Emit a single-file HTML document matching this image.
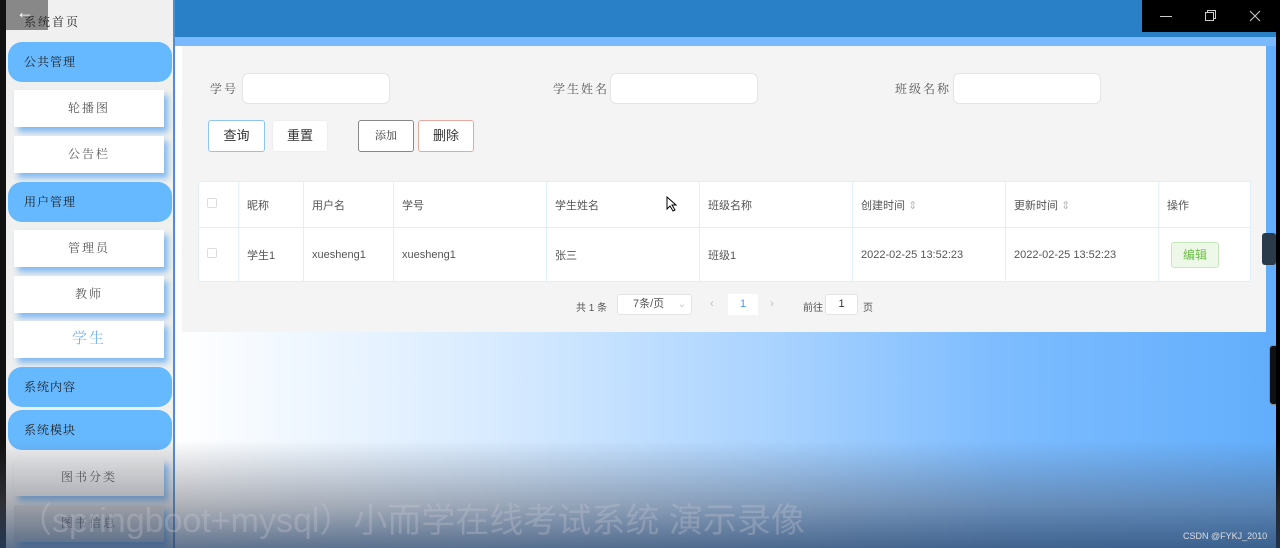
<!DOCTYPE html>
<html><head><meta charset="utf-8"><style>
*{margin:0;padding:0;box-sizing:border-box}
body{width:1280px;height:548px;overflow:hidden;position:relative;font-family:"Liberation Sans","Noto Sans CJK SC",sans-serif;background:#000}
.abs{position:absolute}
#main{left:175px;top:0;width:1101px;height:548px;background:linear-gradient(90deg,#ffffff 0%,#d6eaff 30%,#a8d2ff 55%,#7dbcff 75%,#62aefc 100%)}
#top{left:175px;top:0;width:1101px;height:37px;background:#2a80c6}
#strip{left:175px;top:37px;width:1101px;height:9px;background:#7ab8ff}
#win{left:1142px;top:0;width:138px;height:32px;background:#000;color:#ccc}
#panel{left:182px;top:46px;width:1084px;height:286px;background:#f4f4f4}
#shade{left:0;top:440px;width:1280px;height:108px;background:linear-gradient(180deg,rgba(90,90,90,0) 0%,rgba(80,85,100,.45) 60%,rgba(45,70,105,.75) 100%)}
#side{left:0;top:0;width:175px;height:548px;background:#f0f0f0;border-right:2px solid #4a90d9}
#side .l{position:absolute;left:0;top:0;width:6px;height:548px;background:#111}
.grp{position:absolute;left:8px;width:164px;height:40px;background:#66b8ff;border-radius:14px;font-family:"Liberation Serif","Noto Serif CJK SC",serif;font-size:12px;color:#222;line-height:40px;padding-left:16px;letter-spacing:1px}
.sub{position:absolute;left:14px;width:150px;height:37px;background:#fff;box-shadow:4px 5px 6px rgba(100,170,240,.8);font-family:"Liberation Serif","Noto Serif CJK SC",serif;font-size:12px;color:#555;text-align:center;line-height:37px;letter-spacing:2px}
.lab{position:absolute;font-family:"Liberation Serif","Noto Serif CJK SC",serif;font-size:12px;color:#555;letter-spacing:2px}
.inp{position:absolute;width:148px;height:31px;background:#fff;border:1px solid #e4e4e4;border-radius:6px}
.btn{position:absolute;height:32px;background:#fff;border:1px solid #ddd;border-radius:3px;font-size:13px;color:#333;text-align:center;line-height:30px}
table{position:absolute;left:198px;top:181px;border-collapse:collapse;background:#fff;font-size:11px;color:#555}
td{border:1px solid #dff0fa;padding-left:8px;vertical-align:middle}
.cb{display:inline-block;width:10px;height:10px;border:1px solid #ddd;border-radius:2px;background:#fff}
.pg{position:absolute;font-size:10px;color:#555}
</style></head><body>
<div class="abs" id="main"></div>
<div class="abs" id="top"></div>
<div class="abs" id="strip"></div>
<div class="abs" id="panel"></div>
<div class="lab" style="left:210px;top:80px">学号</div>
<div class="inp" style="left:242px;top:73px"></div>
<div class="lab" style="left:553px;top:80px">学生姓名</div>
<div class="inp" style="left:610px;top:73px"></div>
<div class="lab" style="left:895px;top:80px">班级名称</div>
<div class="inp" style="left:953px;top:73px"></div>
<div class="btn" style="left:208px;top:120px;width:57px;border-color:#90c4ee">查询</div>
<div class="btn" style="left:272px;top:120px;width:56px;border-color:#eee">重置</div>
<div class="btn" style="left:358px;top:120px;width:56px;border-color:#888;font-size:11px;font-family:'Liberation Serif','Noto Serif CJK SC',serif">添加</div>
<div class="btn" style="left:418px;top:120px;width:56px;border-color:#e8a8a0">删除</div>
<table>
<tr style="height:46px"><td style="width:40px"><span class="cb"></span></td><td style="width:65px">昵称</td><td style="width:90px">用户名</td><td style="width:153px">学号</td><td style="width:153px">学生姓名</td><td style="width:153px">班级名称</td><td style="width:153px">创建时间 <span style="color:#bbb">⇕</span></td><td style="width:153px">更新时间 <span style="color:#bbb">⇕</span></td><td style="width:92px">操作</td></tr>
<tr style="height:54px"><td><span class="cb"></span></td><td>学生1</td><td>xuesheng1</td><td>xuesheng1</td><td>张三</td><td>班级1</td><td>2022-02-25 13:52:23</td><td>2022-02-25 13:52:23</td><td><span style="display:inline-block;width:48px;height:26px;border:1px solid #c8e6bc;background:#eef8e8;color:#6cc04a;border-radius:3px;text-align:center;line-height:24px;font-size:12px;margin-left:4px">编辑</span></td></tr>
</table>
<svg class="abs" style="left:666px;top:196px" width="12" height="16"><path d="M1 1 L1 13 L4 10 L7 15 L9 14 L6 9 L10 9 Z" fill="#fff" stroke="#000" stroke-width="1"/></svg>
<div class="pg" style="left:576px;top:299px">共 1 条</div>
<div class="abs" style="left:617px;top:294px;width:75px;height:21px;background:#fff;border:1px solid #e4e4e4;border-radius:3px;font-size:11px;color:#555;line-height:19px;padding-left:15px">7条/页 <span style="color:#ccc;margin-left:10px">⌄</span></div>
<div class="abs" style="left:703px;top:294px;width:83px;height:21px;background:#f4f4f4;font-size:11px;color:#bbb;line-height:21px"><span style="position:absolute;left:7px">‹</span><span style="position:absolute;left:25px;width:30px;height:21px;background:#fff;text-align:center;color:#409eff">1</span><span style="position:absolute;left:67px">›</span></div>
<div class="pg" style="left:803px;top:299px">前往</div>
<div class="abs" style="left:825px;top:294px;width:33px;height:21px;background:#fff;border:1px solid #e4e4e4;border-radius:3px;font-size:11px;color:#333;text-align:center;line-height:19px">1</div>
<div class="pg" style="left:863px;top:299px">页</div>
<div class="abs" style="left:1262px;top:233px;width:14px;height:32px;background:#2a3a4a;border-radius:3px"></div>
<div class="abs" style="left:1269px;top:345px;width:10px;height:60px;background:#111;border:1px solid #888;border-radius:4px"></div>
<div class="abs" style="left:1276px;top:0;width:4px;height:548px;background:#000"></div>
<div class="abs" id="win">
<svg style="position:absolute;left:0;top:0" width="138" height="32"><path d="M18 16.5H30" stroke="#ccc" stroke-width="1"/><rect x="63.5" y="12.5" width="8" height="8" fill="none" stroke="#ccc"/><path d="M65.5 12.5V10.5H73.5V18.5H71.5" fill="none" stroke="#ccc"/><path d="M108 11L118 21M118 11L108 21" stroke="#ccc" stroke-width="1"/></svg></div>
<div class="abs" id="side"><div class="l"></div>
<div class="abs" style="left:6px;top:0;width:42px;height:30px;background:#888"></div>
<div class="abs" style="left:16px;top:2px;color:#fff;font-size:18px">←</div>
<div class="lab" style="left:24px;top:13px;color:#222;font-size:12px">系统首页</div>
<div class="grp" style="top:42px">公共管理</div>
<div class="sub" style="top:90px">轮播图</div>
<div class="sub" style="top:136px">公告栏</div>
<div class="grp" style="top:182px">用户管理</div>
<div class="sub" style="top:230px">管理员</div>
<div class="sub" style="top:276px">教师</div>
<div class="sub" style="top:321px;color:#7ab4ea;font-size:15px">学生</div>
<div class="grp" style="top:367px">系统内容</div>
<div class="grp" style="top:410px">系统模块</div>
<div class="sub" style="top:459px;background:#eee">图书分类</div>
<div class="sub" style="top:505px;background:#ddd">图书信息</div>
</div>
<div class="abs" id="shade"></div>
<div class="abs" style="left:18px;top:493px;font-size:34px;color:rgba(200,200,210,.32);font-family:'Liberation Sans','Noto Sans CJK SC',sans-serif;white-space:nowrap">（springboot+mysql）小而学在线考试系统 演示录像</div>
<div class="abs" style="left:1183px;top:531px;font-size:9px;color:#ddd">CSDN @FYKJ_2010</div>
</body></html>
